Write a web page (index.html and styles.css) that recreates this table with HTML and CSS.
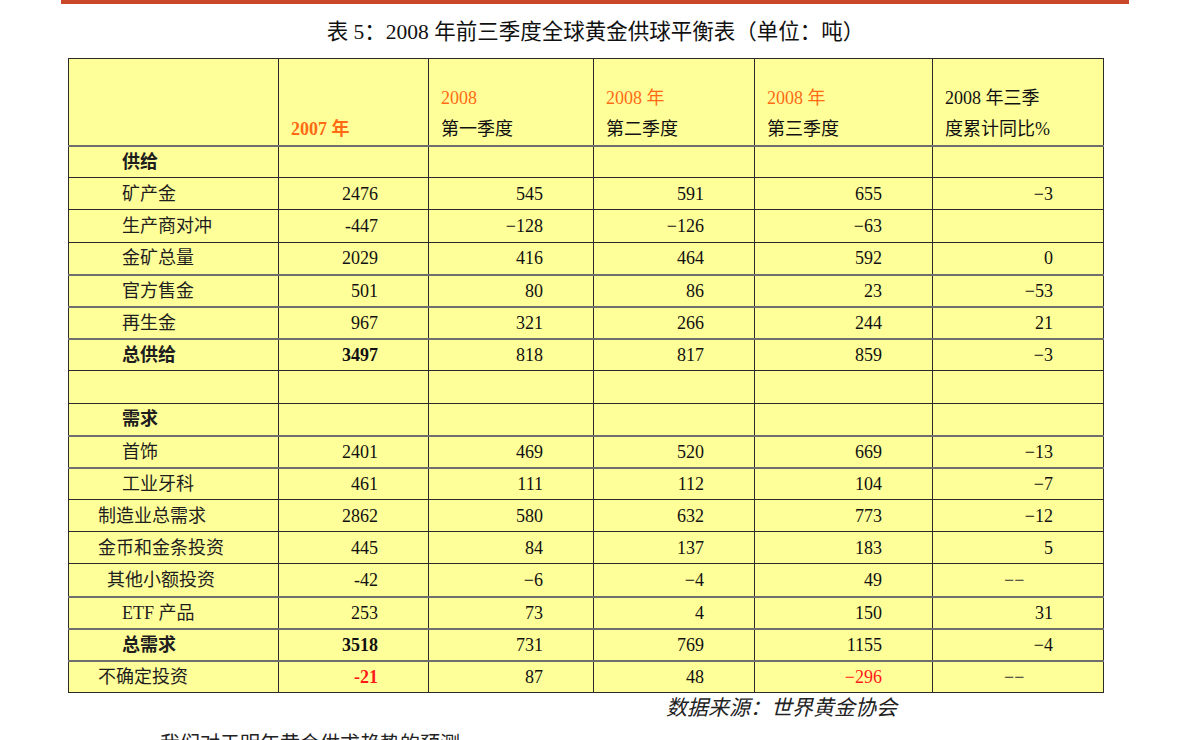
FILE: index.html
```html
<!DOCTYPE html>
<html lang="zh-CN">
<head>
<meta charset="utf-8">
<title>2008年前三季度全球黄金供球平衡表</title>
<link rel="stylesheet" href="styles.css">
</head>
<body>
<div class="page">
  <div class="topbar"></div>
  <h1 class="title">表 5：2008 年前三季度全球黄金供球平衡表（单位：吨）</h1>
  <table class="balance">
    <colgroup>
      <col class="c0"><col class="c1"><col class="c2"><col class="c3"><col class="c4"><col class="c5">
    </colgroup>
    <thead>
      <tr class="head">
        <th></th>
        <th class="h"><span class="orange bold">2007 年</span></th>
        <th class="h"><span class="orange">2008</span><br>第一季度</th>
        <th class="h"><span class="orange">2008 年</span><br>第二季度</th>
        <th class="h"><span class="orange">2008 年</span><br>第三季度</th>
        <th class="h">2008 年三季<br>度累计同比%</th>
      </tr>
    </thead>
    <tbody>
      <tr class="g"><td class="lbl i3 bold">供给</td><td></td><td></td><td></td><td></td><td></td></tr>
      <tr><td class="lbl i3">矿产金</td><td class="n t">2476</td><td class="n">545</td><td class="n">591</td><td class="n">655</td><td class="n">−3</td></tr>
      <tr><td class="lbl i3">生产商对冲</td><td class="n t">-447</td><td class="n">−128</td><td class="n">−126</td><td class="n">−63</td><td></td></tr>
      <tr><td class="lbl i3">金矿总量</td><td class="n t">2029</td><td class="n">416</td><td class="n">464</td><td class="n">592</td><td class="n">0</td></tr>
      <tr class="g"><td class="lbl i3">官方售金</td><td class="n t">501</td><td class="n">80</td><td class="n">86</td><td class="n">23</td><td class="n">−53</td></tr>
      <tr class="g"><td class="lbl i3">再生金</td><td class="n t">967</td><td class="n">321</td><td class="n">266</td><td class="n">244</td><td class="n">21</td></tr>
      <tr class="g"><td class="lbl i3 bold">总供给</td><td class="n t bold">3497</td><td class="n">818</td><td class="n">817</td><td class="n">859</td><td class="n">−3</td></tr>
      <tr><td></td><td></td><td></td><td></td><td></td><td></td></tr>
      <tr><td class="lbl i3 bold">需求</td><td></td><td></td><td></td><td></td><td></td></tr>
      <tr class="g"><td class="lbl i3">首饰</td><td class="n t">2401</td><td class="n">469</td><td class="n">520</td><td class="n">669</td><td class="n">−13</td></tr>
      <tr class="g"><td class="lbl i3">工业牙科</td><td class="n t">461</td><td class="n">111</td><td class="n">112</td><td class="n">104</td><td class="n">−7</td></tr>
      <tr><td class="lbl i1">制造业总需求</td><td class="n t">2862</td><td class="n">580</td><td class="n">632</td><td class="n">773</td><td class="n">−12</td></tr>
      <tr><td class="lbl i1">金币和金条投资</td><td class="n t">445</td><td class="n">84</td><td class="n">137</td><td class="n">183</td><td class="n">5</td></tr>
      <tr><td class="lbl i2">其他小额投资</td><td class="n t">-42</td><td class="n">−6</td><td class="n">−4</td><td class="n">49</td><td class="dash">−−</td></tr>
      <tr class="g"><td class="lbl i3">ETF 产品</td><td class="n t">253</td><td class="n">73</td><td class="n">4</td><td class="n">150</td><td class="n">31</td></tr>
      <tr class="g"><td class="lbl i3 bold">总需求</td><td class="n t bold">3518</td><td class="n">731</td><td class="n">769</td><td class="n">1155</td><td class="n">−4</td></tr>
      <tr class="g"><td class="lbl i1">不确定投资</td><td class="n t bold red">-21</td><td class="n">87</td><td class="n">48</td><td class="n red">−296</td><td class="dash">−−</td></tr>
    </tbody>
  </table>
  <p class="source">数据来源：世界黄金协会</p>
  <p class="next">我们对于明年黄金供求趋势的预测</p>
</div>
</body>
</html>
```

FILE: styles.css
```css
html, body {
  margin: 0;
  padding: 0;
  background: #ffffff;
}

body {
  font-family: "Liberation Serif", "Noto Sans CJK SC", serif;
  color: #111;
  overflow: hidden;
  height: 740px;
}

.page {
  width: 1191px;
}

.topbar {
  margin-left: 61px;
  width: 1068px;
  height: 4px;
  background: #c9472a;
}

.title {
  margin: 14px 0 0 0;
  font-size: 21.5px;
  line-height: 28px;
  font-weight: normal;
  text-align: center;
  color: #111;
}

.balance {
  margin: 12px 0 0 68px;
  border-collapse: collapse;
  table-layout: fixed;
  width: 1035px;
  background: #ffff99;
  border: 1.5px solid #111;
  font-size: 18px;
}

.c0 { width: 210px; }
.c1 { width: 150px; }
.c2 { width: 165px; }
.c3 { width: 161px; }
.c4 { width: 178px; }
.c5 { width: 171px; }

.balance th,
.balance td {
  border: 1px solid #2b2b2b;
  padding: 0;
  height: 31.2px;
  white-space: nowrap;
  line-height: 22px;
}

.balance tr.g td {
  border-top: 2px solid #6f6f6f;
  height: 30.2px;
}

.balance tbody tr:first-child td {
  border-top: 2px solid #6f6f6f;
}

.head th {
  height: 86px;
  vertical-align: bottom;
  text-align: left;
  font-weight: normal;
  line-height: 31px;
  padding: 0 0 0 12px;
  color: #111;
}

.orange { color: #ff6a13; }
.bold { font-weight: bold; }
.red { color: #ff1a1a; }

.lbl {
  text-align: left;
  color: #1e1e1e;
}
.i1 { padding-left: 29px !important; }
.i2 { padding-left: 38px !important; }
.i3 { padding-left: 53px !important; }

.n {
  text-align: right;
  padding-right: 50px !important;
}

.dash {
  text-align: left;
  padding-left: 71px !important;
  color: #333;
}

.source {
  margin: 3px 0 0 666px;
  font-size: 21px;
  line-height: 24px;
  font-style: italic;
  color: #222;
}

.next {
  margin: 12px 0 0 160px;
  font-size: 20px;
  line-height: 24px;
  color: #222;
}
```
